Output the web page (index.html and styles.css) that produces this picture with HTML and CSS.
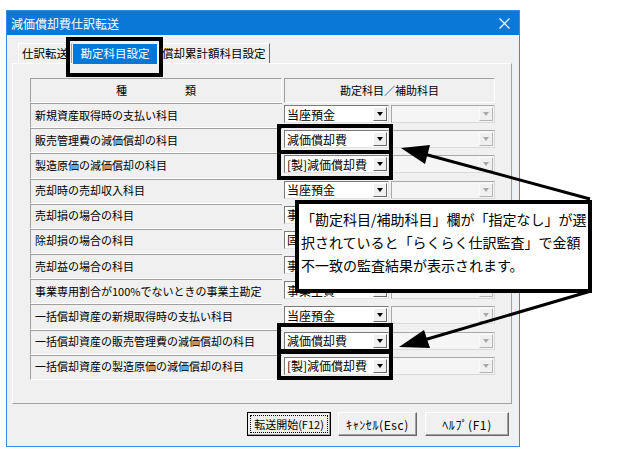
FILE: index.html
```html
<!DOCTYPE html>
<html lang="ja">
<head>
    <meta charset="UTF-8">
    <title>減価償却費仕訳転送</title>
    <link rel="stylesheet" href="styles.css">
</head>
<body>

    <div class="window">
        <div class="titlebar">
            <span>減価償却費仕訳転送</span>
            <svg class="close" width="11" height="11" viewBox="0 0 11 11"><path d="M0.5 0.5 L10.5 10.5 M10.5 0.5 L0.5 10.5" stroke="#fff" stroke-width="1.2"/></svg>
        </div>

        <div class="content">
            <div class="tabs">
                <div class="tab tab-first">仕訳転送</div>
                <div class="tab selected">勘定科目設定</div>
                <div class="tab tab-last">償却累計額科目設定</div>
            </div>

            <div class="panel">
                <div class="grid">
                    <div class="head head-kind"><span>種</span><span>類</span></div>
                    <div class="head">勘定科目／補助科目</div>

                    <div class="label">新規資産取得時の支払い科目</div>
                    <div class="combos"><div class="combo"><span>当座預金</span><i></i></div><div class="combo off"><i></i></div></div>

                    <div class="label">販売管理費の減価償却の科目</div>
                    <div class="combos"><div class="combo"><span>減価償却費</span><i></i></div><div class="combo off"><i></i></div></div>

                    <div class="label">製造原価の減価償却の科目</div>
                    <div class="combos"><div class="combo"><span>[製]減価償却費</span><i></i></div><div class="combo off"><i></i></div></div>

                    <div class="label">売却時の売却収入科目</div>
                    <div class="combos"><div class="combo"><span>当座預金</span><i></i></div><div class="combo off"><i></i></div></div>

                    <div class="label">売却損の場合の科目</div>
                    <div class="combos"><div class="combo"><span>事業主貸</span><i></i></div><div class="combo off"><i></i></div></div>

                    <div class="label">除却損の場合の科目</div>
                    <div class="combos"><div class="combo"><span>固定資産除却損</span><i></i></div><div class="combo off"><i></i></div></div>

                    <div class="label">売却益の場合の科目</div>
                    <div class="combos"><div class="combo"><span>事業主借</span><i></i></div><div class="combo off"><i></i></div></div>

                    <div class="label">事業専用割合が100%でないときの事業主勘定</div>
                    <div class="combos"><div class="combo"><span>事業主貸</span><i></i></div><div class="combo off"><i></i></div></div>

                    <div class="label">一括償却資産の新規取得時の支払い科目</div>
                    <div class="combos"><div class="combo"><span>当座預金</span><i></i></div><div class="combo off"><i></i></div></div>

                    <div class="label">一括償却資産の販売管理費の減価償却の科目</div>
                    <div class="combos"><div class="combo"><span>減価償却費</span><i></i></div><div class="combo off"><i></i></div></div>

                    <div class="label">一括償却資産の製造原価の減価償却の科目</div>
                    <div class="combos"><div class="combo"><span>[製]減価償却費</span><i></i></div><div class="combo off"><i></i></div></div>
                </div>
            </div>

            <div class="buttons">
                <button class="btn btn-default">転送開始(F12)</button>
                <button class="btn btn-cancel">ｷｬﾝｾﾙ(Esc)</button>
                <button class="btn btn-help">ﾍﾙﾌﾟ(F1)</button>
            </div>
        </div>
    </div>

    <!-- 注釈（黒枠・吹き出し・矢印） -->
    <div class="mark mark-tab"></div>
    <div class="mark mark-a1"></div>
    <div class="mark mark-a2"></div>
    <div class="mark mark-b1"></div>
    <div class="mark mark-b2"></div>

    <div class="callout">
        「勘定科目/補助科目」欄が「指定なし」が選<br>
        択されていると「らくらく仕訳監査」で金額<br>
        不一致の監査結果が表示されます。
    </div>

    <svg class="arrows" width="642" height="454" viewBox="0 0 642 454">
        <line x1="590" y1="199" x2="424" y2="154" stroke="#000" stroke-width="3"/>
        <polygon points="401,148 430,145 425,164" fill="#000"/>
        <line x1="591" y1="291" x2="424" y2="340" stroke="#000" stroke-width="3"/>
        <polygon points="399,347 424,330 430,348" fill="#000"/>
    </svg>

</body>
</html>
```

FILE: styles.css
```css
/* ダイアログ全体 */
body {
    margin: 0;
    width: 642px;
    height: 454px;
    position: relative;
    overflow: hidden;
    background-color: #fff;
    font-family: "Noto Sans CJK JP", sans-serif;
    color: #000;
}

.window {
    margin: 10px 0 0 6px;
    width: 514px;
    height: 437px;
    box-sizing: border-box;
    border: 1px solid #3a8ce0;
    background-color: #f0f0f0;
    display: flex;
    flex-direction: column;
}

.titlebar {
    height: 24px;
    background-color: #0a78d7;
    color: #fff;
    font-size: 12px;
    display: flex;
    align-items: center;
    justify-content: space-between;
    padding: 0 9px 0 4px;
}

.content {
    flex: 1;
    padding: 8px 7px 10px 5px;
    display: flex;
    flex-direction: column;
}

/* タブ */
.tabs {
    display: flex;
    align-items: flex-end;
    height: 20px;
    padding-left: 6px;
}

.tab {
    height: 20px;
    box-sizing: border-box;
    font-size: 11.5px;
    line-height: 19px;
    border-top: 1px solid #fff;
    border-left: 1px solid #fff;
    border-right: 1px solid #a0a0a0;
    background-color: #f0f0f0;
    white-space: nowrap;
}

.tab-first {
    width: 54px;
    padding-left: 3px;
}

.tab.selected {
    width: 86px;
    height: 22px;
    margin-bottom: -2px;
    position: relative;
    z-index: 1;
    border: 1px solid #f0f0f0;
    background-color: #0078d7;
    color: #fff;
    text-align: center;
    line-height: 18px;
}

.tab-last {
    width: 112px;
    padding-left: 3px;
    border-right-color: #696969;
}

.panel {
    height: 341px;
    box-sizing: border-box;
    border: 1px solid;
    border-color: #fff #a0a0a0 #a0a0a0 #fff;
    padding: 14px 0 0 17px;
}

/* 科目設定の表 */
.grid {
    display: grid;
    grid-template-columns: 252px 211px;
    grid-template-rows: 25px repeat(11, 1fr);
    column-gap: 2px;
    width: 465px;
    height: 302px;
}

.head {
    display: flex;
    align-items: center;
    justify-content: center;
    font-size: 11px;
    border-top: 1px solid #a0a0a0;
    border-left: 1px solid #a0a0a0;
    border-right: 1px solid #fff;
    border-bottom: 1px solid #fff;
    padding-bottom: 1px;
}

.head-kind {
    gap: 58px;
}

.label {
    display: flex;
    align-items: center;
    font-size: 11px;
    padding: 0 0 2px 4px;
    border-top: 1px solid #a0a0a0;
    border-left: 1px solid #a0a0a0;
    border-bottom: 1px solid #fff;
    white-space: nowrap;
}

.combos {
    display: flex;
    gap: 2px;
    padding-top: 2px;
}

.combo {
    width: 105px;
    height: 18px;
    flex: none;
    box-sizing: border-box;
    border: 1px solid;
    border-color: #7a7a7a #e3e3e3 #e3e3e3 #7a7a7a;
    background-color: #fff;
    display: flex;
    align-items: center;
    padding-left: 2px;
    font-size: 12px;
    white-space: nowrap;
    overflow: hidden;
}

.combo i {
    width: 14px;
    height: 14px;
    margin: 0 1px 0 auto;
    flex: none;
    box-sizing: border-box;
    border: 1px solid;
    border-color: #fff #696969 #696969 #fff;
    background-color: #f0f0f0;
    position: relative;
}

/* 下向き三角 */
.combo i::after {
    content: "";
    position: absolute;
    left: 3px;
    top: 4px;
    border-left: 3.5px solid transparent;
    border-right: 3.5px solid transparent;
    border-top: 4px solid #000;
}

.combo.off {
    width: 104px;
    background-color: #f5f5f5;
    border-color: #a8a8a8 #dadada #dadada #a8a8a8;
}

.combo.off i {
    border-color: #fafafa #b4b4b4 #b4b4b4 #fafafa;
}

.combo.off i::after {
    border-top-color: #a8a8a8;
}

/* 下部ボタン */
.buttons {
    display: flex;
    justify-content: flex-end;
    gap: 7px;
    margin-top: 8px;
    padding-right: 3px;
}

.btn {
    height: 24px;
    box-sizing: border-box;
    font-family: "Noto Sans CJK JP", sans-serif;
    font-size: 11px;
    white-space: nowrap;
    background-color: #f0f0f0;
    border: 1px solid;
    border-color: #fff #696969 #696969 #fff;
    box-shadow: inset -1px -1px #a0a0a0;
    padding: 0;
    color: #000;
}

.btn-default {
    width: 84px;
    border-color: #000;
    outline: 1px dotted #000;
    outline-offset: -4px;
}

.btn-cancel {
    width: 79px;
    font-size: 12px;
    letter-spacing: 0.6px;
}

.btn-help {
    width: 84px;
    margin-left: 1px;
    font-size: 12px;
    letter-spacing: 0.6px;
}

/* 注釈 */
.mark {
    position: absolute;
    box-sizing: border-box;
    border: 4px solid #000;
}

.mark-tab {
    left: 66px;
    top: 37px;
    width: 97px;
    height: 40px;
}

.mark-a1,
.mark-a2,
.mark-b1,
.mark-b2 {
    left: 277px;
    width: 116px;
    height: 30px;
}

.mark-a1 { top: 124px; }
.mark-a2 { top: 150px; }
.mark-b1 { top: 323px; }
.mark-b2 { top: 350px; }

.callout {
    position: absolute;
    left: 295px;
    top: 200px;
    width: 297px;
    height: 93px;
    box-sizing: border-box;
    border: 4px solid #000;
    background-color: #fff;
    padding: 4px 0 0 2px;
    font-size: 14px;
    line-height: 23px;
    white-space: nowrap;
}

.arrows {
    position: absolute;
    left: 0;
    top: 0;
    pointer-events: none;
}
```
